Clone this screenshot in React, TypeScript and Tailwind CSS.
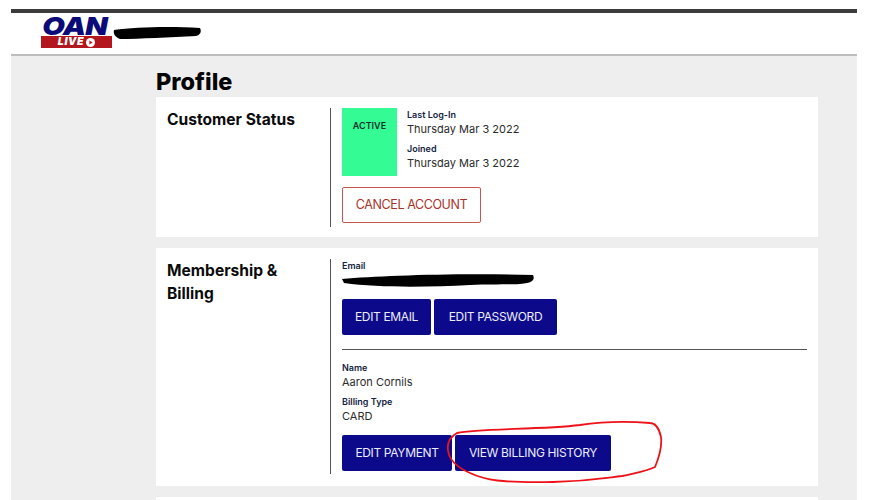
const sans = "font-['Inter',sans-serif]";

function Label({ children }: { children: string }) {
  return <div className={`${sans} text-[9px] leading-[14px] font-semibold text-[#14233f]`}>{children}</div>;
}

function Value({ children }: { children: string }) {
  return <div className={`${sans} text-[11px] leading-[14px] text-[#2b2b2b]`}>{children}</div>;
}

function BlueButton({ children, width }: { children: string; width: string }) {
  return (
    <button className={`${sans} ${width} h-9 rounded-[2px] bg-[#0c0a8a] text-[12px] tracking-[-0.35px] text-[#ececf8] whitespace-nowrap`}>
      {children}
    </button>
  );
}

function Card({ title, children, height, bottom }: { title: React.ReactNode; children: React.ReactNode; height: string; bottom: string }) {
  return (
    <section className={`bg-white flex pt-[11px] ${height}`}>
      <h2 className={`${sans} w-[174px] pl-[11px] text-[15.6px] leading-[23px] font-bold text-[#0b0b0b] shrink-0`}>
        {title}
      </h2>
      <div className={`flex-1 border-l border-[#555] pl-[11px] pr-[11px] ${bottom}`}>{children}</div>
    </section>
  );
}

function Logo() {
  return (
    <div className="flex flex-col items-start w-[72px]">
      <div className={`${sans} italic font-black text-[25px] leading-[20px] text-[#0a0a78] tracking-[-0.6px] pl-[1px] scale-x-[1.17] origin-left`}>
        OAN
      </div>
      <div className="w-[71px] h-[12px] bg-[#b3161c] flex items-center justify-center gap-[2px]">
        <span className={`${sans} italic font-black text-[10.5px] leading-[12px] tracking-[0.6px] text-white`}>LIVE</span>
        <svg width="9" height="9" viewBox="0 0 9 9">
          <circle cx="4.5" cy="4.5" r="4.5" fill="#fff" />
          <path d="M3.4 2.4 L6.6 4.5 L3.4 6.6 Z" fill="#b3161c" />
        </svg>
      </div>
    </div>
  );
}

export default function App() {
  return (
    <div className="relative w-[884px] h-[500px] overflow-hidden bg-white">
      <div className="ml-[11px] mr-[27px] pt-[9px] h-full flex flex-col">
        <div className="h-[4px] bg-[#3c3c3c] shrink-0" />
        <header className="h-[43px] bg-white border-b-2 border-[#bdbdbd] pl-[30px] pt-[3px] shrink-0">
          <Logo />
        </header>
        <main className="flex-1 bg-[#eeeeee] pl-[145px] pr-[39px] overflow-hidden">
          <h1 className={`${sans} pt-[11px] text-[23.5px] leading-[30px] font-extrabold text-[#050505]`}>Profile</h1>
          <div className="flex flex-col gap-[11px]">
            <Card title="Customer Status" height="h-[140px]" bottom="mb-[10px]">
              <div className="flex">
                <div className={`${sans} w-[55px] h-[68px] bg-[#35fb95] pt-[11px] text-center text-[9px] leading-[13px] font-semibold text-[#14332a]`}>
                  ACTIVE
                </div>
                <div className="ml-[10px]">
                  <Label>Last Log-In</Label>
                  <Value>Thursday Mar 3 2022</Value>
                  <div className="mt-[6px]">
                    <Label>Joined</Label>
                    <Value>Thursday Mar 3 2022</Value>
                  </div>
                </div>
              </div>
              <button className={`${sans} mt-[11px] h-9 w-[139px] rounded-[2px] border border-[#c8574d] bg-white text-[12.5px] tracking-[-0.4px] text-[#a8322a]`}>
                CANCEL ACCOUNT
              </button>
            </Card>
            <Card title={<>Membership &amp;<br />Billing</>} height="h-[238px]" bottom="mb-[12px]">
              <Label>Email</Label>
              <div className="h-[14px]" />
              <div className="flex gap-[3px] mt-[12px]">
                <BlueButton width="w-[89px]">EDIT EMAIL</BlueButton>
                <BlueButton width="w-[123px]">EDIT PASSWORD</BlueButton>
              </div>
              <div className="border-t border-[#555] mt-[14px] pt-[11px]">
                <Label>Name</Label>
                <Value>Aaron Cornils</Value>
                <div className="mt-[6px]">
                  <Label>Billing Type</Label>
                  <Value>CARD</Value>
                </div>
              </div>
              <div className="flex gap-[3px] mt-[12px]">
                <BlueButton width="w-[110px]">EDIT PAYMENT</BlueButton>
                <BlueButton width="w-[156px]">VIEW BILLING HISTORY</BlueButton>
              </div>
            </Card>
            <section className="bg-white h-[40px]" />
          </div>
        </main>
      </div>
      {/* marker annotations sit on top of the page */}
      <svg className="absolute inset-0 pointer-events-none" width="884" height="500" viewBox="0 0 884 500" fill="none">
        <path d="M114 30 C135 27 170 26 200 28 C202 32 200 35 196 36 C170 37 140 39 120 39 C115 37 113 34 114 30 Z" fill="#000" />
        <path d="M342 279 C380 276 450 273 533 275 C535 279 533 282 527 283 C520 285 500 284 470 285 C430 287 380 288 344 283 Z" fill="#000" />
        <path
          d="M580 425 C540 430 480 428 457 433 C450 437 447 443 448 450 C449 460 456 467 470 473 C485 480 500 483 553 482 C590 481 605 478 622 476 C635 473 648 471 655 467 C660 455 662 445 661 437 C659 428 655 423 650 423 C625 421 600 422 580 425 Z"
          stroke="#ee1119"
          strokeWidth="1.8"
        />
      </svg>
    </div>
  );
}
